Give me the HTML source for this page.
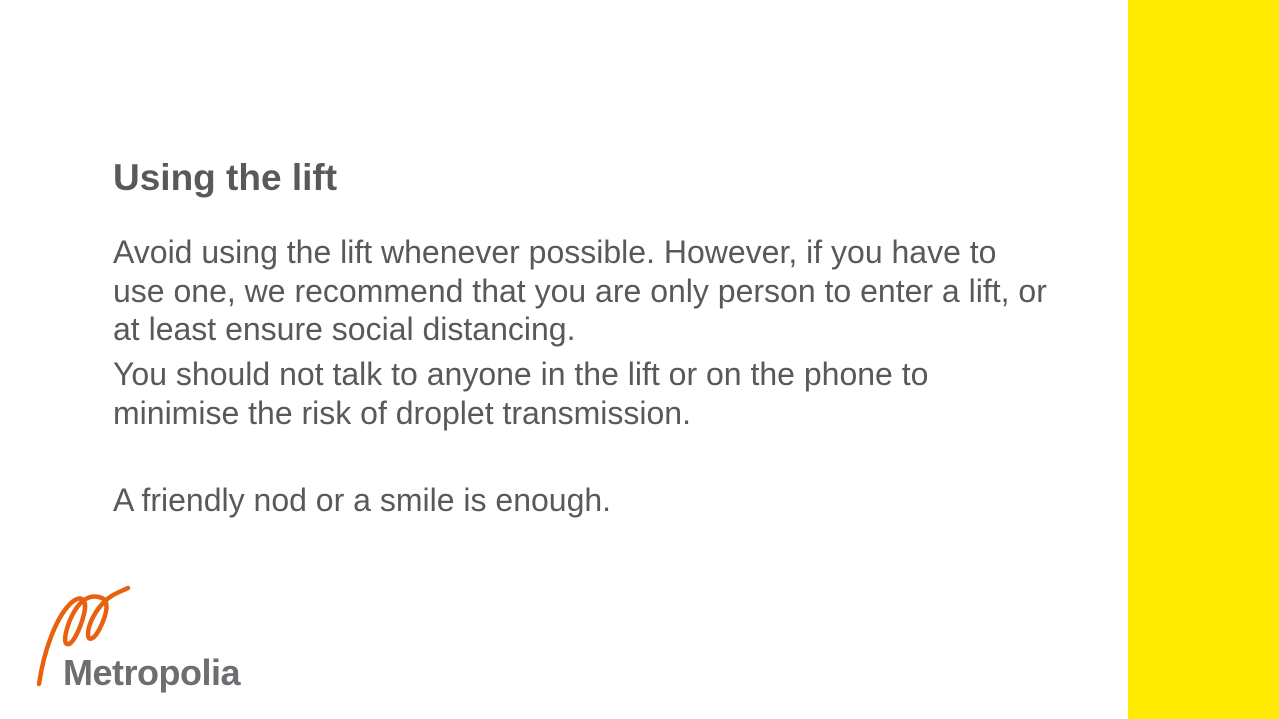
<!DOCTYPE html>
<html><head><style>
body{margin:0;width:1279px;height:719px;background:#fff;position:relative;overflow:hidden;font-family:"Liberation Sans",sans-serif;color:#595959}
.y{position:absolute;left:1128px;top:0;width:151px;height:719px;background:#ffea00}
h1{position:absolute;left:113px;top:157px;margin:0;font-size:37px;font-weight:bold}
.p{position:absolute;left:113px;font-size:32px;line-height:38.5px;margin:0}
.logo{position:absolute;left:63px;top:652px;font-size:36px;font-weight:bold;color:#6d6e71;letter-spacing:-0.5px}
</style></head><body>
<div class="y"></div>
<h1>Using the lift</h1>
<p class="p" style="top:233px">Avoid using the lift whenever possible. However, if you have to<br>use one, we recommend that you are only person to enter a lift, or<br>at least ensure social distancing.</p>
<p class="p" style="top:355px">You should not talk to anyone in the lift or on the phone to<br>minimise the risk of droplet transmission.</p>
<p class="p" style="top:481px">A friendly nod or a smile is enough.</p>
<svg style="position:absolute;left:30px;top:580px" width="110" height="110" viewBox="0 0 110 110">
<g fill="none" stroke="#e8610f" stroke-width="4.5" stroke-linecap="round">
<path d="M9 104 C14 70 26 38 40 24 C50 14 58 18 54 34 C50 50 42 66 37 64 C32 62 38 42 44 32 C52 18 62 14 72 18 C80 22 76 36 70 48 C64 60 58 62 58 54 C58 44 66 30 74 22 C82 14 90 12 98 8"/>
</g></svg>
<div class="logo">Metropolia</div>
</body></html>
